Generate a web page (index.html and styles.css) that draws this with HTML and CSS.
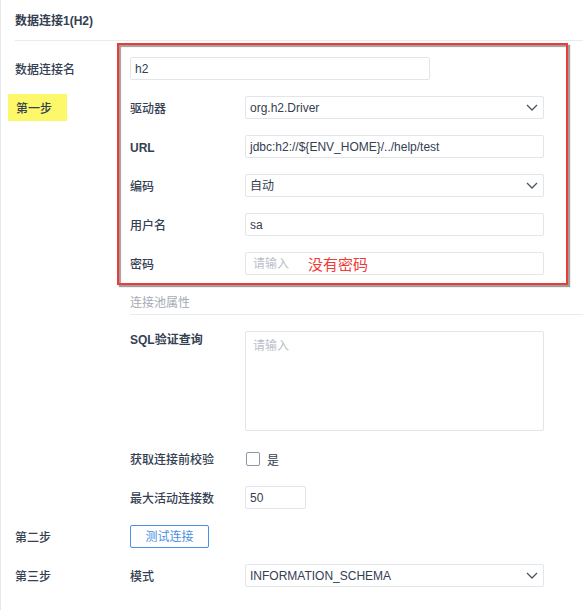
FILE: index.html
```html
<!DOCTYPE html>
<html lang="zh">
<head>
<meta charset="utf-8">
<title>数据连接1(H2)</title>
<link rel="stylesheet" href="styles.css">
</head>
<body>
<div class="page">
  <div class="header">数据连接1(H2)</div>
  <div class="form">
    <div class="row">
      <div class="step">数据连接名</div>
      <div class="input name-input">h2</div>
    </div>
    <div class="row">
      <div class="step"><span class="highlight">第一步</span></div>
      <div class="label">驱动器</div>
      <div class="input select">org.h2.Driver<svg class="chev" viewBox="0 0 12 7" width="12" height="7"><path d="M1 1l5 5 5-5" fill="none" stroke="#4b5563" stroke-width="1.3"/></svg></div>
    </div>
    <div class="row">
      <div class="step"></div>
      <div class="label bold">URL</div>
      <div class="input">jdbc:h2://${ENV_HOME}/../help/test</div>
    </div>
    <div class="row">
      <div class="step"></div>
      <div class="label">编码</div>
      <div class="input select">自动<svg class="chev" viewBox="0 0 12 7" width="12" height="7"><path d="M1 1l5 5 5-5" fill="none" stroke="#4b5563" stroke-width="1.3"/></svg></div>
    </div>
    <div class="row">
      <div class="step"></div>
      <div class="label">用户名</div>
      <div class="input">sa</div>
    </div>
    <div class="row">
      <div class="step"></div>
      <div class="label">密码</div>
      <div class="input"><span class="placeholder">请输入</span><span class="note">没有密码</span></div>
    </div>
    <div class="section">连接池属性</div>
    <div class="row top">
      <div class="step"></div>
      <div class="label bold">SQL验证查询</div>
      <div class="input textarea"><span class="placeholder">请输入</span></div>
    </div>
    <div class="row">
      <div class="step"></div>
      <div class="label">获取连接前校验</div>
      <div class="check-field"><span class="checkbox"></span><span class="check-text">是</span></div>
    </div>
    <div class="row">
      <div class="step"></div>
      <div class="label">最大活动连接数</div>
      <div class="input small-input">50</div>
    </div>
    <div class="row">
      <div class="step">第二步</div>
      <div class="button">测试连接</div>
    </div>
    <div class="row">
      <div class="step">第三步</div>
      <div class="label">模式</div>
      <div class="input select">INFORMATION_SCHEMA<svg class="chev" viewBox="0 0 12 7" width="12" height="7"><path d="M1 1l5 5 5-5" fill="none" stroke="#4b5563" stroke-width="1.3"/></svg></div>
    </div>
  </div>
  <div class="annotation"></div>
</div>
</body>
</html>
```

FILE: styles.css
```css
html, body {
  margin: 0;
  padding: 0;
  background: #ffffff;
}

body {
  font-family: "Liberation Sans", "Noto Sans CJK SC", sans-serif;
  font-size: 12px;
  color: #344052;
}

.page {
  position: relative;
  width: 583px;
  height: 610px;
  border-left: 1px solid #e6e8ec;
  padding-left: 14px;
  box-sizing: border-box;
  overflow: hidden;
}

.header {
  height: 38px;
  padding-top: 2px;
  line-height: 38px;
  font-weight: bold;
  border-bottom: 1px solid #e9ebee;
  margin-right: -1px;
}

.form {
  display: flex;
  flex-direction: column;
  gap: 16px;
  padding-top: 16px;
}

.row {
  display: flex;
  align-items: center;
  height: 23px;
}

.row.top {
  align-items: flex-start;
  height: auto;
}

.step {
  width: 115px;
  flex: none;
  font-weight: 500;
  line-height: 23px;
  padding-top: 3px;
}

.highlight {
  display: inline-block;
  margin-left: -7px;
  margin-top: -3px;
  padding: 3px 15px 0 8px;
  height: 24px;
  line-height: 24px;
  background: #fdf86a;
}

.label {
  width: 115px;
  flex: none;
  font-weight: 500;
  line-height: 23px;
  padding-top: 3px;
}

.row.top .label {
  padding-top: 0;
  margin-top: -2px;
}

.label.bold {
  font-weight: bold;
}

.input {
  position: relative;
  box-sizing: border-box;
  width: 299px;
  height: 23px;
  border: 1px solid #e2e5e9;
  border-radius: 2px;
  padding-left: 4px;
  padding-top: 1px;
  line-height: 21px;
  display: flex;
  align-items: center;
  white-space: nowrap;
}

.name-input {
  width: 300px;
}

.small-input {
  width: 61px;
}

.select .chev {
  position: absolute;
  right: 5px;
  top: 7px;
}

.placeholder {
  color: #b9bfc8;
  padding-left: 3px;
}

.note {
  color: #ef3b36;
  font-size: 15px;
  margin-left: 19px;
}

.textarea {
  height: 100px;
  align-items: flex-start;
  padding-top: 5px;
  line-height: 18px;
}

.section {
  margin-left: 115px;
  height: 22px;
  padding-top: 1px;
  line-height: 22px;
  color: #a5abb5;
  border-bottom: 1px solid #e9ebee;
}

.check-field {
  display: flex;
  align-items: center;
  padding-left: 1px;
}

.checkbox {
  box-sizing: border-box;
  width: 14px;
  height: 14px;
  border: 1px solid #8d96a5;
  border-radius: 2px;
}

.check-text {
  margin-left: 7px;
  padding-top: 2px;
}

.button {
  box-sizing: border-box;
  width: 79px;
  height: 23px;
  line-height: 21px;
  padding-top: 1px;
  text-align: center;
  border: 1px solid #4a8fe5;
  border-radius: 2px;
  color: #4a8fe5;
}

.annotation {
  position: absolute;
  left: 116px;
  top: 43px;
  width: 451px;
  height: 242px;
  box-sizing: border-box;
  border: 2px solid #ef3b36;
  box-shadow: 2px 2px 1px rgba(0, 0, 0, 0.38), inset 2px 2px 1px rgba(0, 0, 0, 0.38);
  pointer-events: none;
}
```
